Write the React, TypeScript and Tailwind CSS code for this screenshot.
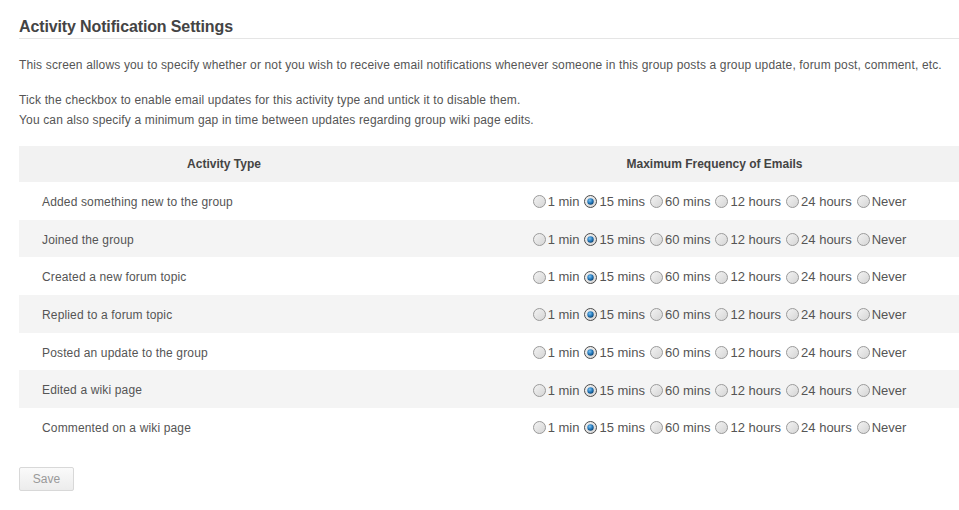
import React from "react";

const rows = [
  "Added something new to the group",
  "Joined the group",
  "Created a new forum topic",
  "Replied to a forum topic",
  "Posted an update to the group",
  "Edited a wiki page",
  "Commented on a wiki page",
];

const opts = ["1 min", "15 mins", "60 mins", "12 hours", "24 hours", "Never"];

function Radio({ checked }: { checked: boolean }) {
  return (
    <svg width="13" height="13" viewBox="0 0 13 13" className="shrink-0">
      <defs>
        <linearGradient id="ru" x1="0" y1="0" x2="1" y2="1">
          <stop offset="0" stopColor="#f4f4f4" />
          <stop offset="1" stopColor="#d4d4d4" />
        </linearGradient>
        <radialGradient id="rc" cx="0.4" cy="0.35" r="0.7">
          <stop offset="0" stopColor="#7fc3f0" />
          <stop offset="0.6" stopColor="#1f74b8" />
          <stop offset="1" stopColor="#0d3d66" />
        </radialGradient>
      </defs>
      <circle cx="6.5" cy="6.5" r="6" fill="url(#ru)" stroke={checked ? "#4a4a4a" : "#9a9a9a"} strokeWidth="1" />
      {checked && <circle cx="6.5" cy="6.5" r="3.2" fill="url(#rc)" />}
    </svg>
  );
}

export default function App() {
  return (
    <div
      className="bg-white w-[959px] h-[510px] text-[#555] text-[12px]"
      style={{ fontFamily: '"Liberation Sans", Arial, sans-serif' }}
    >
      <div className="pl-[19px] pt-[17px]">
        <h2 className="text-[16px] font-bold text-[#444] leading-[20px] pb-[1px] tracking-[-0.13px] border-b border-[#e5e5e5]">
          Activity Notification Settings
        </h2>
        <p className="mt-[16px] leading-[20px] tracking-[0.15px]">
          This screen allows you to specify whether or not you wish to receive email notifications whenever someone in this group posts a group update, forum post, comment, etc.
        </p>
        <p className="mt-[15px] leading-[20px] tracking-[0.15px]">
          Tick the checkbox to enable email updates for this activity type and untick it to disable them.
          <br />
          You can also specify a minimum gap in time between updates regarding group wiki page edits.
        </p>
        <div className="mt-[16px]">
          <div className="flex h-[36px] items-center bg-[#f2f2f2] font-bold text-[#444]">
            <div className="w-[410px] text-center">Activity Type</div>
            <div className="flex-1 pl-[41px] text-center">Maximum Frequency of Emails</div>
          </div>
          {rows.map((r, i) => (
            <div
              key={r}
              className={`flex h-[37.7px] items-center ${i % 2 === 1 ? "bg-[#f4f4f4]" : "bg-white"}`}
            >
              <div className="w-[410px] pl-[23px] pt-[2px] tracking-[0.15px]">{r}</div>
              <div className="flex-1 pl-[56px] flex justify-center items-center pt-[2px] text-[13px]">
                <div className="flex items-center">
                  {opts.map((o, j) => (
                    <label key={o} className="flex items-center mr-[5px]">
                      <Radio checked={j === 1} />
                      <span className="ml-[2px]">{o}</span>
                    </label>
                  ))}
                </div>
              </div>
            </div>
          ))}
        </div>
        <button className="mt-[21px] w-[55px] h-[24px] rounded-[2px] border border-[#d8d8d8] bg-gradient-to-b from-[#fafafa] to-[#ececec] text-[#999] text-[12px]">
          Save
        </button>
      </div>
    </div>
  );
}
